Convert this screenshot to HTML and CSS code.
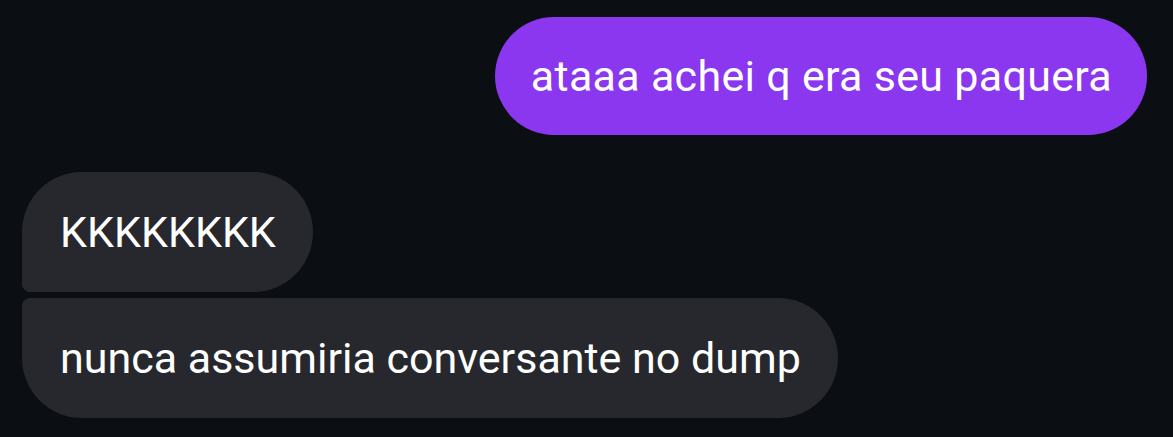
FILE: index.html
```html
<!DOCTYPE html>
<html lang="pt">
<head>
  <meta charset="UTF-8">
  <title>Direct</title>
  <link rel="stylesheet" href="styles.css">
</head>
<body>
  <div class="chat">
    <div class="row sent">
      <div class="bubble purple">ataaa achei q era seu paquera</div>
    </div>
    <div class="group">
      <div class="row">
        <div class="bubble gray first">KKKKKKKK</div>
      </div>
      <div class="row">
        <div class="bubble gray last">nunca assumiria conversante no dump</div>
      </div>
    </div>
  </div>
</body>
</html>
```

FILE: styles.css
```css
body {
  margin: 0;
  background-color: #0b0f14;
  color: #fff;
  font-family: Roboto, "Liberation Sans", sans-serif;
}

.chat {
  display: flex;
  flex-direction: column;
  padding: 17px 26px 0 22px;
}

.row {
  display: flex;
}

.sent {
  justify-content: flex-end;
  margin-bottom: 37px;
}

.group {
  display: flex;
  flex-direction: column;
  gap: 6px;
}

.bubble {
  font-size: 43px;
  line-height: 48px;
  padding: 36px 37px 36px 38px;
  border-radius: 60px;
  white-space: nowrap;
}

.purple {
  background-color: #8a37ef;
  padding: 35px 35px 35px 36px;
  letter-spacing: 0.3px;
}

.gray {
  background-color: #26282d;
}

.gray.first {
  border-bottom-left-radius: 8px;
}

.gray.last {
  border-top-left-radius: 8px;
}
```
